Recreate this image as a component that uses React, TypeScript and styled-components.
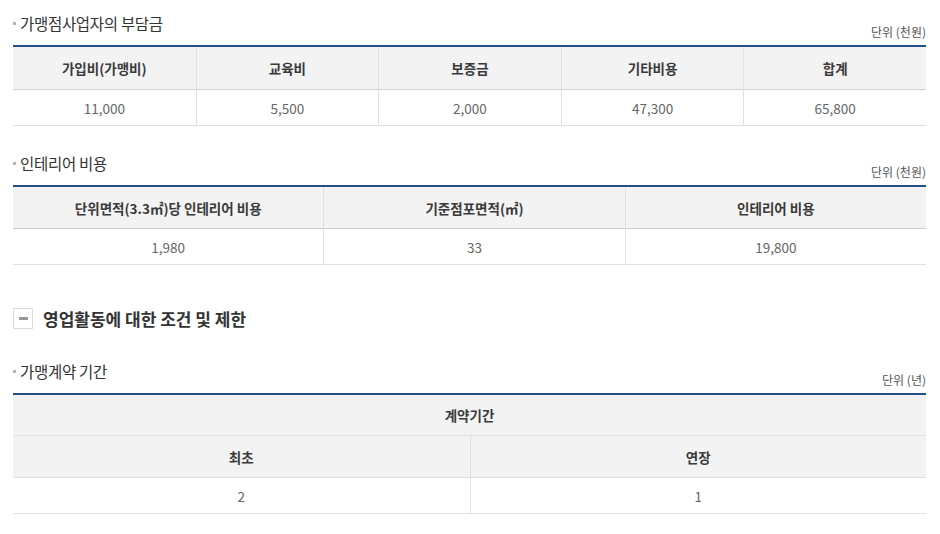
import React from "react";
import styled, { createGlobalStyle } from "styled-components";

const GlobalStyle = createGlobalStyle`
  html, body { margin: 0; padding: 0; background: #fff; }
  body { font-family: "Noto Sans CJK KR", "Noto Sans", sans-serif; color: #333; }
  * { box-sizing: border-box; }
`;

const Page = styled.div`
  width: 940px;
  padding: 0 14px 0 13px;
`;

const SectionHead = styled.div<{ $top: number }>`
  display: flex;
  justify-content: space-between;
  align-items: flex-end;
  padding-top: ${(p) => p.$top}px;
  padding-bottom: 5px;
`;

const Title = styled.h3`
  display: flex;
  align-items: center;
  gap: 4px;
  margin: 0 0 7px;
  font-size: 15.5px;
  line-height: 20px;
  font-weight: 400;
  color: #333;
  letter-spacing: -0.3px;
  &::before {
    content: "";
    width: 3px;
    height: 3px;
    background: #b5b5b5;
  }
`;

const Unit = styled.span`
  font-size: 12px;
  line-height: 16px;
  color: #555;
`;

const Table = styled.table`
  width: 100%;
  border-collapse: separate;
  border-spacing: 0;
  table-layout: fixed;
  border-top: 2px solid #24508a;
`;

const Th = styled.th<{ $h?: number; $last?: boolean }>`
  height: ${(p) => p.$h ?? 43}px;
  padding: 0;
  background: #f3f3f3;
  font-size: 13.5px;
  font-weight: 700;
  color: #3a3a3a;
  text-align: center;
  border-bottom: 1px solid ${(p) => (p.$last ? "#cfcfcf" : "#e0e0e0")};
  & + & { border-left: 1px solid #e0e0e0; }
`;

const Td = styled.td`
  height: 36px;
  padding: 0;
  font-size: 13.5px;
  color: #666;
  text-align: center;
  border-bottom: 1px solid #e0e0e0;
  & + & { border-left: 1px solid #e0e0e0; }
`;

const BigHeading = styled.h2`
  display: flex;
  align-items: center;
  gap: 10px;
  margin: 42px 0 0;
  height: 22px;
  font-size: 17px;
  font-weight: 700;
  color: #333;
`;

const ToggleBox = styled.span`
  display: flex;
  align-items: center;
  justify-content: center;
  width: 20px;
  height: 21px;
  border: 1px solid #dcdcdc;
  &::after {
    content: "";
    width: 9px;
    height: 3px;
    background: #999;
  }
`;

export default function App() {
  return (
    <>
      <GlobalStyle />
      <Page>
        <SectionHead $top={13}>
          <Title>가맹점사업자의 부담금</Title>
          <Unit>단위 (천원)</Unit>
        </SectionHead>
        <Table>
          <thead>
            <tr>
              <Th $last>가입비(가맹비)</Th>
              <Th $last>교육비</Th>
              <Th $last>보증금</Th>
              <Th $last>기타비용</Th>
              <Th $last>합계</Th>
            </tr>
          </thead>
          <tbody>
            <tr>
              <Td>11,000</Td>
              <Td>5,500</Td>
              <Td>2,000</Td>
              <Td>47,300</Td>
              <Td>65,800</Td>
            </tr>
          </tbody>
        </Table>

        <SectionHead $top={27}>
          <Title>인테리어 비용</Title>
          <Unit>단위 (천원)</Unit>
        </SectionHead>
        <Table>
          <colgroup>
            <col style={{ width: "34%" }} />
            <col style={{ width: "33%" }} />
            <col style={{ width: "33%" }} />
          </colgroup>
          <thead>
            <tr>
              <Th $last $h={42}>단위면적(3.3㎡)당 인테리어 비용</Th>
              <Th $last $h={42}>기준점포면적(㎡)</Th>
              <Th $last $h={42}>인테리어 비용</Th>
            </tr>
          </thead>
          <tbody>
            <tr>
              <Td>1,980</Td>
              <Td>33</Td>
              <Td>19,800</Td>
            </tr>
          </tbody>
        </Table>

        <BigHeading>
          <ToggleBox />
          영업활동에 대한 조건 및 제한
        </BigHeading>

        <SectionHead $top={32}>
          <Title>가맹계약 기간</Title>
          <Unit>단위 (년)</Unit>
        </SectionHead>
        <Table>
          <thead>
            <tr>
              <Th colSpan={2} $h={41}>계약기간</Th>
            </tr>
            <tr>
              <Th $h={42}>최초</Th>
              <Th $h={42}>연장</Th>
            </tr>
          </thead>
          <tbody>
            <tr>
              <Td>2</Td>
              <Td>1</Td>
            </tr>
          </tbody>
        </Table>
      </Page>
    </>
  );
}
